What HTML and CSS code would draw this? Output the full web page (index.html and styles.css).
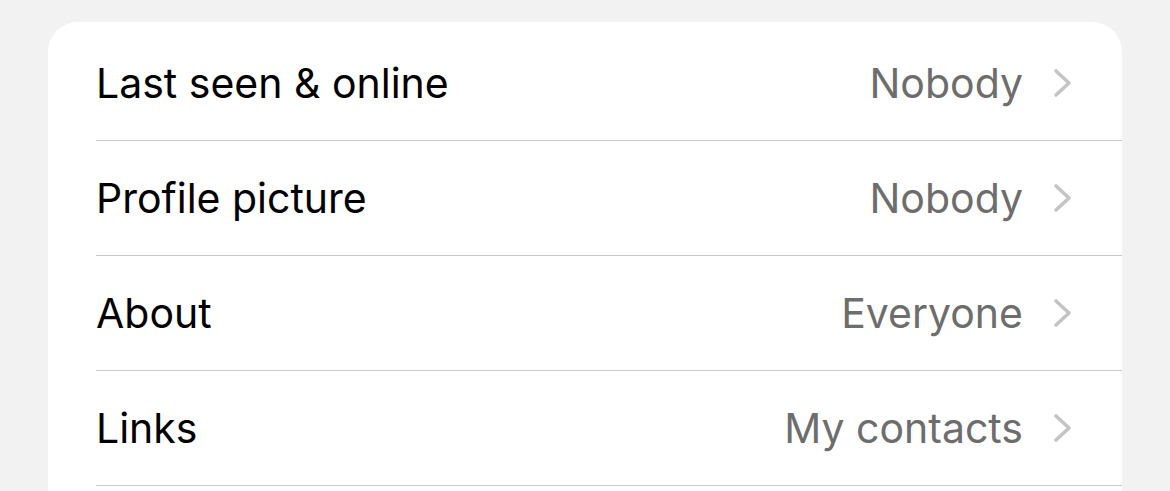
FILE: index.html
```html
<!DOCTYPE html>
<html>
<head>
<meta charset="utf-8">
<link rel="stylesheet" href="styles.css">
</head>
<body>
<div class="card">
  <div class="row first">
    <span class="label">Last seen &amp; online</span>
    <span class="value">Nobody</span>
    <svg class="chev" viewBox="0 0 20 30"><path d="M3 3 L16 15 L3 27" /></svg>
  </div>
  <div class="row">
    <span class="label">Profile picture</span>
    <span class="value">Nobody</span>
    <svg class="chev" viewBox="0 0 20 30"><path d="M3 3 L16 15 L3 27" /></svg>
  </div>
  <div class="row">
    <span class="label">About</span>
    <span class="value">Everyone</span>
    <svg class="chev" viewBox="0 0 20 30"><path d="M3 3 L16 15 L3 27" /></svg>
  </div>
  <div class="row">
    <span class="label">Links</span>
    <span class="value">My contacts</span>
    <svg class="chev" viewBox="0 0 20 30"><path d="M3 3 L16 15 L3 27" /></svg>
  </div>
</div>
</body>
</html>
```
FILE: styles.css
```css
html, body {
  margin: 0;
  padding: 0;
  background: #f2f2f2;
  height: 491px;
  overflow: hidden;
}
.card {
  margin: 22px 48px 0 48px;
  width: 1074px;
  background: #ffffff;
  border-radius: 30px 30px 0 0;
  padding-left: 48px;
  box-sizing: border-box;
  padding-top: 4px;
  height: 480px;
  font-family: Inter, "Liberation Sans", sans-serif;
}
.row {
  display: flex;
  align-items: center;
  height: 114px;
  border-bottom: 1px solid #c8c8c8;
  padding-right: 49px;
}
.label {
  flex: 1;
  font-size: 41px;
  color: #000;
}
.value {
  font-size: 41px;
  color: #6d6d6d;
}
.chev {
  width: 20px;
  height: 30px;
  margin-left: 30px;
  fill: none;
  stroke: #c4c4c7;
  stroke-width: 3.6;
  stroke-linecap: round;
  stroke-linejoin: round;
}
```
